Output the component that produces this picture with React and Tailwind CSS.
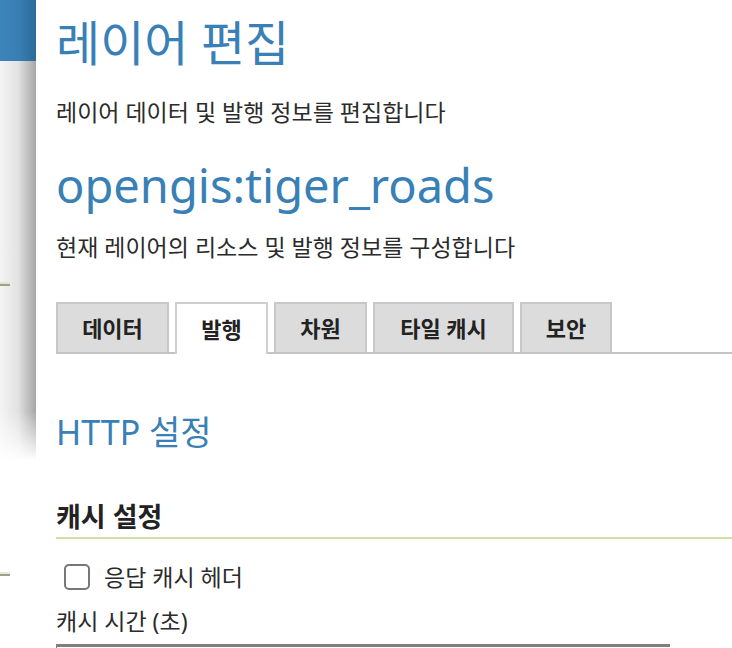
import React from "react";

const tabs = [
  { label: "데이터", w: "w-[113px]" },
  { label: "발행", w: "w-[93px]", active: true },
  { label: "차원", w: "w-[93px]" },
  { label: "타일 캐시", w: "w-[141px]" },
  { label: "보안", w: "w-[92px]" },
];

const font = { fontFamily: '"Noto Sans", "Noto Sans CJK KR", sans-serif' };

export default function App() {
  return (
    <div className="flex w-[732px] h-[648px] overflow-hidden bg-white" style={font}>
      {/* sidebar behind the panel */}
      <div className="w-[36px] shrink-0 flex flex-col">
        <div className="h-[61px] bg-gradient-to-r from-[#3b84ba] via-[#3a7fb4] to-[#2c6a98]" />
        <div className="h-[350px] bg-gradient-to-r from-[#f4f4f4] via-[#e2e2e2] to-[#a6a6a6] flex flex-col">
          <div className="h-[221px]" />
          <div className="w-[10px] h-[4px] bg-[#dfe8cc] border-b-2 border-[#a0a090]" />
        </div>
        <div className="h-[50px] bg-gradient-to-r from-[#f4f4f4] via-[#e2e2e2] to-[#a6a6a6]">
          <div className="h-full bg-gradient-to-b from-transparent to-white" />
        </div>
        <div className="flex-1 bg-white flex flex-col">
          <div className="h-[111px]" />
          <div className="w-[10px] h-[4px] bg-[#e6ecd8] border-b-2 border-[#a0a090]" />
        </div>
      </div>

      {/* main panel */}
      <div className="flex-1 bg-white rounded-tl-[10px] pl-[20px] pt-[14px] text-[#2b2b2b]">
        <h1 className="text-[48px] leading-[58px] text-[#3880b6]">레이어 편집</h1>
        <p className="mt-[25px] text-[23px] leading-[30px]">레이어 데이터 및 발행 정보를 편집합니다</p>
        <h2 className="mt-[28px] text-[47px] leading-[60px] text-[#3880b6]">opengis:tiger_roads</h2>
        <p className="mt-[17px] text-[23px] leading-[30px]">현재 레이어의 리소스 및 발행 정보를 구성합니다</p>

        <div className="mt-[40px] flex items-end border-b-2 border-[#c4c4c4]">
          {tabs.map((t) => (
            <div
              key={t.label}
              className={
                t.active
                  ? `${t.w} h-[52px] -mb-[2px] mr-[6px] flex items-center justify-center bg-white border-2 border-b-0 border-[#cfcfcf] text-[22px] font-bold text-[#222]`
                  : `${t.w} h-[50px] mr-[6px] flex items-center justify-center bg-[#dcdcdc] border-2 border-b-0 border-[#c8c8c8] text-[22px] font-bold text-[#222]`
              }
            >
              {t.label}
            </div>
          ))}
        </div>

        <h3 className="mt-[56px] text-[34px] leading-[44px] text-[#3880b6]">HTTP 설정</h3>

        <div className="mt-[46px] pb-[3px] border-b-2 border-[#cfe0a4]">
          <h4 className="text-[27px] leading-[34px] font-bold text-[#222]">캐시 설정</h4>
        </div>

        <label className="mt-[23px] ml-[8px] flex items-center gap-[14px] text-[23px] leading-[30px]">
          <span className="w-[26px] h-[26px] rounded-[5px] border-2 border-[#777] bg-white" />
          응답 캐시 헤더
        </label>
        <p className="mt-[14px] text-[23px] leading-[30px]">캐시 시간 (초)</p>
        <div className="mt-[8px] w-[614px] h-[20px] border-t-[3px] border-l border-[#7f7f7f]" />
      </div>
    </div>
  );
}
